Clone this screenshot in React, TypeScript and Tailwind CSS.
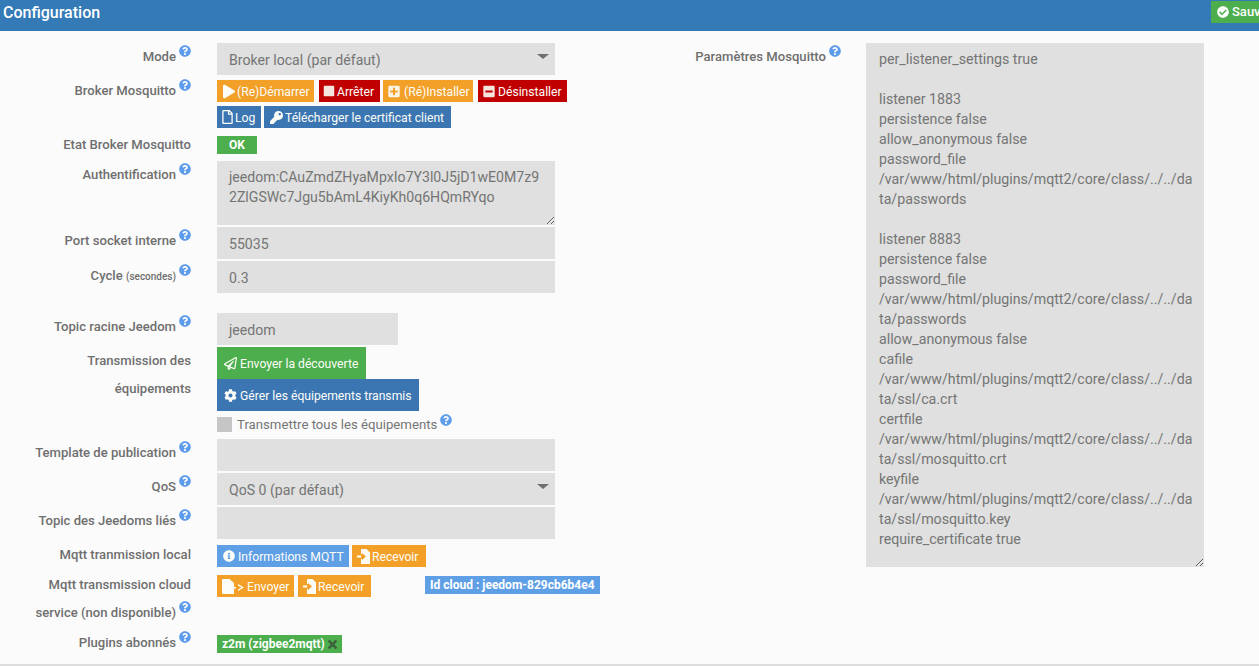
import type { ReactNode } from 'react'
import {
  FaCheckCircle,
  FaCog,
  FaInfoCircle,
  FaKey,
  FaMinusSquare,
  FaPlay,
  FaPlusSquare,
  FaQuestionCircle,
  FaRegFile,
  FaRegPaperPlane,
  FaStop,
  FaTimes,
} from 'react-icons/fa'

const mosquittoConfig = `per_listener_settings true

listener 1883
persistence false
allow_anonymous false
password_file /var/www/html/plugins/mqtt2/core/class/../../data/passwords

listener 8883
persistence false
password_file /var/www/html/plugins/mqtt2/core/class/../../data/passwords
allow_anonymous false
cafile /var/www/html/plugins/mqtt2/core/class/../../data/ssl/ca.crt
certfile /var/www/html/plugins/mqtt2/core/class/../../data/ssl/mosquitto.crt
keyfile /var/www/html/plugins/mqtt2/core/class/../../data/ssl/mosquitto.key
require_certificate true`

function Help() {
  return <FaQuestionCircle className="ml-[3px] block h-[12px] w-[12px] shrink-0 text-[#5d9cec]" />
}

function Label({ children, help = true, offset }: { children: ReactNode; help?: boolean; offset: string }) {
  return (
    <div className={`flex w-[191px] shrink-0 justify-end text-right text-[13.1px] font-medium leading-[28px] text-[#6f6f6f] ${offset}`}>
      <span>{children}</span>
      {help && <span className="block h-[12px] pt-[2px]"><Help /></span>}
    </div>
  )
}

function Row({
  label,
  help,
  offset = 'mt-0',
  className,
  children,
}: {
  label: ReactNode
  help?: boolean
  offset?: string
  className: string
  children: ReactNode
}) {
  return (
    <div className={`flex ${className}`}>
      <Label help={help} offset={offset}>{label}</Label>
      <div className="ml-[26px] min-w-0 flex-1">{children}</div>
    </div>
  )
}

function Field({ value = '', caret, className = 'w-[338px]' }: { value?: string; caret?: boolean; className?: string }) {
  return (
    <div className={`flex h-[32px] items-center justify-between bg-[#dfe0df] pl-[12px] pr-[6px] text-[14.1px] text-[#757575] ${className}`}>
      <span className="pt-[3px]">{value}</span>
      {caret && <span className="mb-[6px] h-0 w-0 border-x-[6px] border-t-[5px] border-x-transparent border-t-[#6f6f6f]" />}
    </div>
  )
}

function Btn({ icon, children, className }: { icon: ReactNode; children: ReactNode; className: string }) {
  return (
    <span className={`flex shrink-0 items-center whitespace-nowrap text-[12.15px] font-normal text-[#fdfdf8] ${className}`}>
      {icon}
      <span className="pt-[2px]">{children}</span>
    </span>
  )
}

function ReceiveIcon() {
  return (
    <svg viewBox="0 0 13 15" className="h-[15px] w-[13px]" fill="currentColor">
      <path d="M5 0h4.500L13 3.500V15H4v-5h2V5H4V1q0-1 1-1z" />
      <path d="M0 6.500h5V4l4 3.500L5 11V8.500H0z" />
      <path d="M4 6.500h1V4l4 3.500L5 11V8.500H4z" className="fill-[#f2a028]" />
    </svg>
  )
}

function SendIcon() {
  return (
    <svg viewBox="0 0 24 15" className="h-[15px] w-[24px]" fill="currentColor">
      <path d="M1 0h6.500L12 4v11H1q-1 0-1-1V1q0-1 1-1z" />
      <path d="M8 8h6v1.500H8z" />
      <path d="M16 5l6 3.500-6 3.500v-1.500l3.500-2-3.500-2z" />
    </svg>
  )
}

function Textarea({ value, className }: { value: string; className: string }) {
  return (
    <textarea
      readOnly
      defaultValue={value}
      className={`block w-[338px] bg-[#dfe0df] py-[6px] leading-[20px] text-[#757575] outline-none ${className}`}
    />
  )
}

export default function App() {
  return (
    <div className="h-[666px] w-[1259px] overflow-hidden border-b-2 border-[#dcdcdc] bg-[#fbfbfb] font-['Roboto',sans-serif]">
      <header className="flex h-[31px] items-start bg-[#337ab7] pl-[3px]">
        <h1 className="text-[16px] font-medium leading-[25px] text-white">Configuration</h1>
        <span className="ml-auto mt-px flex h-[22px] w-[48px] items-center gap-[3px] overflow-hidden whitespace-nowrap bg-[#4cae4c] pl-[6px] text-[13px] font-medium text-white">
          <FaCheckCircle className="shrink-0 text-[12px]" />
          Sauvegarder
        </span>
      </header>

      <main className="flex">
        <div className="w-[620px] shrink-0">
          <Row label="Mode" className="mt-[12px] h-[32px]">
            <Field value="Broker local (par défaut)" caret />
          </Row>

          <Row label="Broker Mosquitto" offset="mt-[-3px]" className="mt-[5px] h-[48px]">
            <div className="flex h-[22px]">
              <Btn icon={<FaPlay className="mr-[2px] h-[15px] w-[12px]" />} className="w-[97px] bg-[#f2a028] pl-[6px]">
                (Re)Démarrer
              </Btn>
              <Btn icon={<FaStop className="mr-[2px] h-[12px] w-[12px] opacity-90" />} className="ml-[5px] w-[61px] bg-[#c00000] pl-[4px]">
                Arrêter
              </Btn>
              <Btn icon={<FaPlusSquare className="mr-[4px] h-[13px] w-[12px] opacity-90" />} className="ml-[3px] w-[90px] bg-[#f2a028] pl-[5px]">
                (Ré)Installer
              </Btn>
              <Btn icon={<FaMinusSquare className="mr-[3px] h-[13px] w-[12px] opacity-90" />} className="ml-[5px] w-[89px] bg-[#c00000] pl-[5px]">
                Désinstaller
              </Btn>
            </div>
            <div className="mt-[4px] flex h-[22px]">
              <Btn icon={<FaRegFile className="mr-[2px] h-[14px] w-[11px]" />} className="w-[44px] bg-[#3c76b2] pl-[5px]">
                Log
              </Btn>
              <Btn icon={<FaKey className="mr-[2px] h-[13px] w-[13px]" />} className="ml-[3px] w-[187px] bg-[#3c76b2] pl-[6px]">
                Télécharger le certificat client
              </Btn>
            </div>
          </Row>

          <Row label="Etat Broker Mosquitto" help={false} offset="mt-px" className="mt-[2px] h-[30px]">
            <span className="mt-[6px] flex h-[18px] w-[40px] items-center justify-center bg-[#4cae4c] text-[12px] font-bold text-white">OK</span>
          </Row>

          <Row label="Authentification" className="mt-px">
            <Textarea
              value="jeedom:CAuZmdZHyaMpxIo7Y3l0J5jD1wE0M7z92ZlGSWc7Jgu5bAmL4KiyKh0q6HQmRYqo"
              className="h-[64px] px-[12px] text-[14.1px]"
            />
          </Row>

          <Row label="Port socket interne" className="mt-[2px]"><Field value="55035" /></Row>

          <Row label={<>Cycle <small className="text-[10px]">(secondes)</small></>} offset="mt-px" className="mt-[2px]">
            <Field value="0.3" />
          </Row>

          <Row label="Topic racine Jeedom" className="mt-[20px]"><Field value="jeedom" className="w-[181px]" /></Row>

          <Row label={<>Transmission des<br />équipements</>} help={false} className="mt-[2px]">
            <Btn icon={<FaRegPaperPlane className="mr-[3px] h-[13px] w-[13px]" />} className="h-[32px] w-[149px] bg-[#4cae4c] pl-[7px]">
              Envoyer la découverte
            </Btn>
            <Btn icon={<FaCog className="mr-[3px] h-[13px] w-[13px]" />} className="h-[32px] w-[202px] bg-[#3c76b2] pl-[7px]">
              Gérer les équipements transmis
            </Btn>
            <div className="mt-[6px] flex h-[15px] items-center text-[13.2px] text-[#757575]">
              <span className="mr-[5px] h-[15px] w-[15px] bg-[#c6c6c6]" />
              Transmettre tous les équipements
              <FaQuestionCircle className="mb-[9px] ml-[3px] text-[12px] text-[#5d9cec]" />
            </div>
          </Row>

          <Row label="Template de publication" className="mt-[7px]"><Field /></Row>
          <Row label="QoS" className="mt-[2px]"><Field value="QoS 0 (par défaut)" caret /></Row>
          <Row label="Topic des Jeedoms liés" className="mt-[2px]"><Field /></Row>

          <Row label="Mqtt tranmission local" help={false} offset="mt-[-4px]" className="mt-[6px] h-[22px]">
            <div className="flex h-[22px]">
              <Btn icon={<FaInfoCircle className="mr-[3px] h-[12px] w-[12px]" />} className="w-[132px] bg-[#5f9fe6] pl-[6px]">
                Informations MQTT
              </Btn>
              <Btn icon={<span className="mr-[2px]"><ReceiveIcon /></span>} className="ml-[3px] w-[74px] bg-[#f2a028] pl-[5px]">
                Recevoir
              </Btn>
            </div>
          </Row>

          <Row
            label={
              <>
                Mqtt transmission cloud
                <br />
                <span className="inline-flex items-start">
                  service (non disponible)
                  <span className="block h-[12px] pt-[2px]"><Help /></span>
                </span>
              </>
            }
            help={false}
            offset="mt-[-4px]"
            className="mt-[8px] h-[56px]"
          >
            <div className="flex h-[22px] items-start">
              <Btn icon={<span className="mr-px"><SendIcon /></span>} className="h-[22px] w-[77px] bg-[#f2a028] pl-[5px]">
                Envoyer
              </Btn>
              <Btn icon={<span className="mr-[2px]"><ReceiveIcon /></span>} className="ml-[4px] h-[22px] w-[73px] bg-[#f2a028] pl-[5px]">
                Recevoir
              </Btn>
              <span className="ml-[54px] mt-px flex h-[18px] items-center bg-[#5f9fe6] px-[5px] text-[12px] font-bold text-white">
                Id cloud : jeedom-829cb6b4e4
              </span>
            </div>
          </Row>

          <Row label="Plugins abonnés" offset="mt-[-2px]" className="mt-0">
            <span className="mt-[3px] inline-flex h-[18px] w-[125px] items-center bg-[#4cae4c] pl-[5px] text-[12px] font-bold text-white">
              z2m (zigbee2mqtt)
              <FaTimes className="ml-[2px] h-[13px] w-[11px] text-[#3d5f3d]" />
            </span>
          </Row>
        </div>

        <div className="mt-[12px] flex">
          <div className="flex h-[28px] w-[221px] shrink-0 justify-end text-[13.1px] font-medium leading-[28px] text-[#6f6f6f]">
            <span>Paramètres Mosquitto</span>
            <span className="block h-[12px] pt-[2px]"><Help /></span>
          </div>
          <Textarea value={mosquittoConfig} className="ml-[25px] h-[524px] pl-[13px] pr-[11px] text-[14.2px]" />
        </div>
      </main>
    </div>
  )
}
